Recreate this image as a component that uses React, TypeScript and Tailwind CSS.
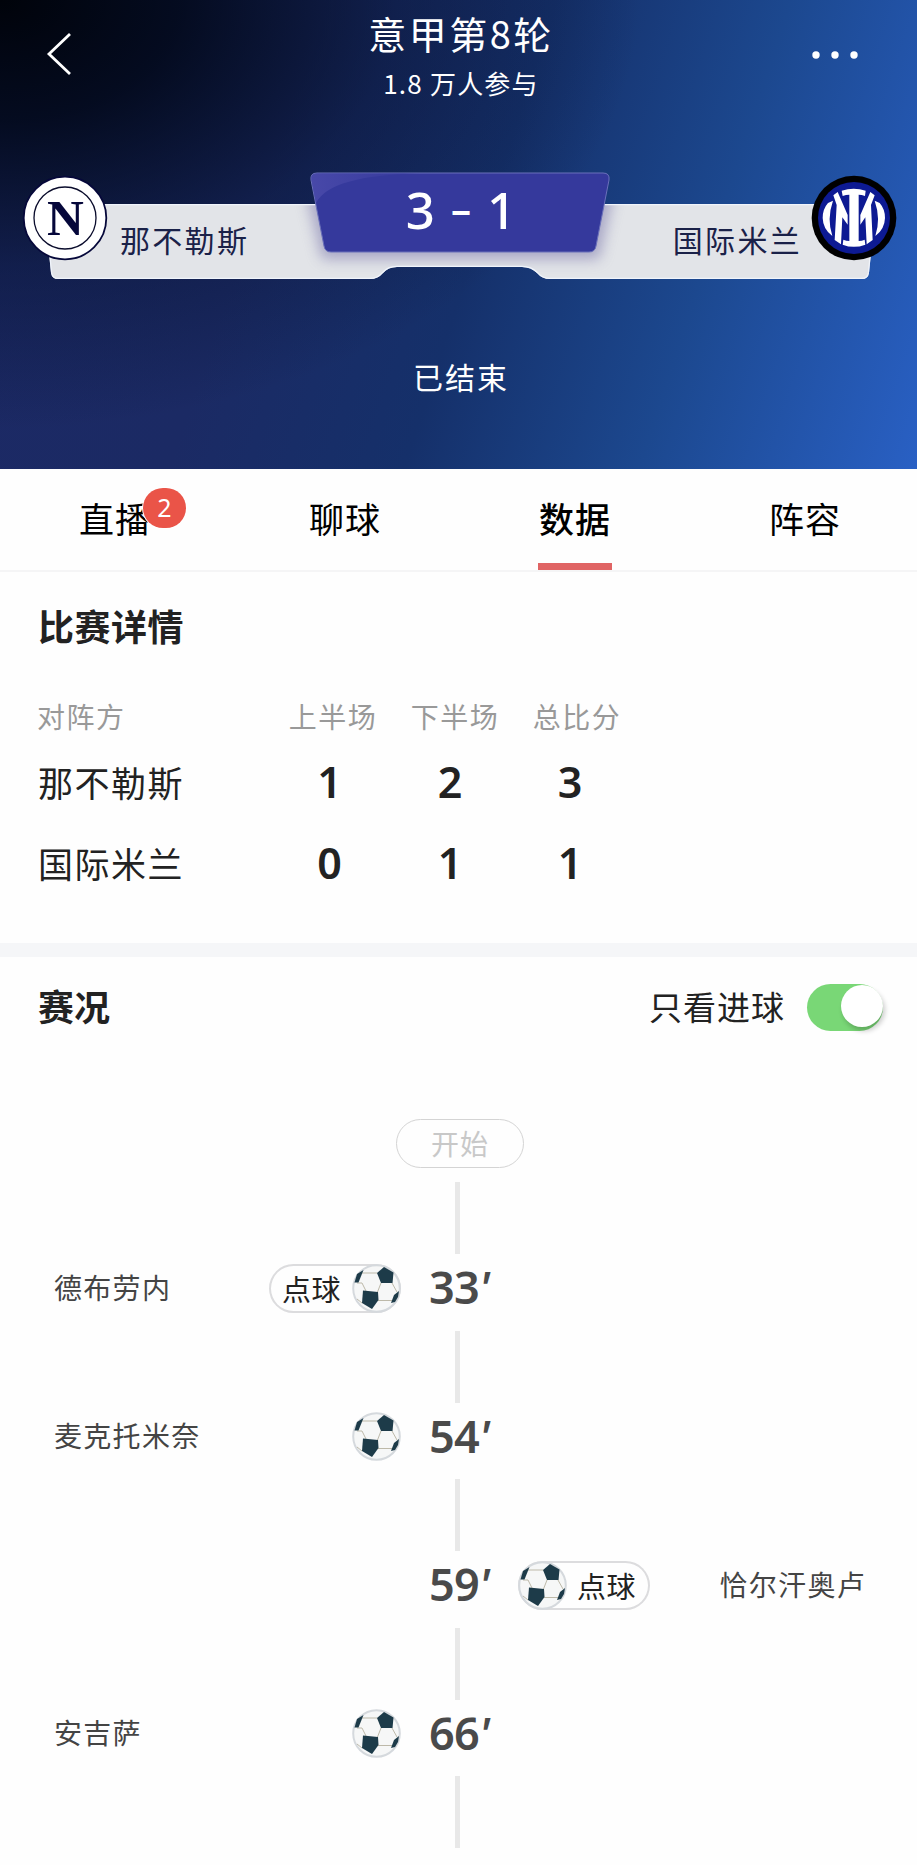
import { useState } from 'react';

const tabs = [
  { name: '直播', badge: 2 },
  { name: '聊球' },
  { name: '数据' },
  { name: '阵容' },
];

const scores = [
  { team: '那不勒斯', first: 1, second: 2, total: 3 },
  { team: '国际米兰', first: 0, second: 1, total: 1 },
];

const goals = [
  { minute: 33, player: '德布劳内', side: 'home', penalty: true },
  { minute: 54, player: '麦克托米奈', side: 'home', penalty: false },
  { minute: 59, player: '恰尔汗奥卢', side: 'away', penalty: true },
  { minute: 66, player: '安吉萨', side: 'home', penalty: false },
];

// Grey-white strip behind the team names, notched under the score
const stripPath = 'M44 37H876L869 106Q868 112 862 112H550Q542 112 537 106Q531 100 522 100H397Q388 100 383 106Q378 112 370 112H58Q52 112 51 106Z';

function NapoliLogo() {
  return (
    <svg className="w-[86px] h-[86px] shrink-0" viewBox="0 0 86 86">
      <circle cx="43" cy="43" r="41.3" fill="#fff" stroke="#06083a" strokeWidth="1.8" />
      <circle cx="43" cy="43" r="31" fill="none" stroke="#0a0c2c" strokeWidth="1.3" />
      <text x="43.5" y="59.5" textAnchor="middle" fill="#05073a" fontSize="51" fontWeight="700" fontFamily="'Liberation Serif', serif">N</text>
    </svg>
  );
}

function InterLogo() {
  return (
    <svg className="w-[86px] h-[86px] shrink-0" viewBox="12 14 258 258">
      <circle cx="141" cy="143" r="127" fill="#000" />
      <circle cx="141" cy="143" r="108" fill="#0d1a93" />
      <g fill="#fff">
        <path d="M104 61 Q140 49 176 61 L174 77 Q164 73 155 73 L155 212 Q165 212 173 208 L175 223 Q140 236 107 223 L109 208 Q118 212 127 212 L127 73 Q117 73 107 77 Z" />
        <path d="M79 75 L92 65 L122 134 L122 163 L106 141 L102 222 L83 209 L89 104 Z" />
        <path d="M203 75 L190 65 L160 134 L160 163 L175 141 L179 222 L197 209 L192 104 Z" />
        <path d="M63 98 L78 91 Q59 145 76 197 Q48 177 47 143 Q47 116 63 98 Z" />
        <path d="M218 98 L203 91 Q222 145 205 197 Q233 177 234 143 Q234 116 218 98 Z" />
      </g>
    </svg>
  );
}

function Ball() {
  return (
    <svg className="w-[49px] h-[49px] shrink-0" viewBox="0 0 49 49">
      <circle cx="24.5" cy="24.5" r="23.3" fill="#f6f7f7" stroke="#d5d9dd" strokeWidth="2" />
      <path d="M10 9H25M29 19L25.5 28M40 19L45 28M26 36.5H40M5 19H10L14 27M10 39L5 35" fill="none" stroke="#bdb9a9" />
      <g fill="#1d3b49">
        <path d="M32 3L41.5 8.5L40.5 19H29L25 9Z" />
        <path d="M11 26.5L26 28L26.5 36L20 45L10 39Z" />
        <path d="M2.5 18.5L5 10L11.5 6L6.5 18.5Z" />
        <path d="M39 39L42 31L47 27L46 33L43 38Z" />
      </g>
    </svg>
  );
}

function BannerShape() {
  return (
    <svg className="absolute inset-0 w-full h-full" viewBox="0 0 917 126">
      <defs>
        <filter id="soft" x="-10%" y="-20%" width="120%" height="150%">
          <feGaussianBlur stdDeviation="7" />
        </filter>
        <clipPath id="strip">
          <path d={stripPath} />
        </clipPath>
        <linearGradient id="shine" x1="0" y1="0" x2="1" y2="0">
          <stop offset="0" stopColor="#504fae" />
          <stop offset="1" stopColor="#35399c" />
        </linearGradient>
      </defs>
      <g clipPath="url(#strip)">
        <rect width="917" height="126" fill="#e2e4e8" />
        <path d="M305 20H615L599 92H322Z" fill="#7f7cae" opacity="0.6" filter="url(#soft)" />
        <path d={stripPath} fill="none" stroke="#f0f4fb" strokeWidth="2.5" />
      </g>
      <path d="M317 6H603Q610 6 609 13L596 79Q595 85 589 85H331Q325 85 324 79L311 13Q310 6 317 6Z" fill="#35399c" stroke="#6a70ba" />
      <path d="M317 6.5H420Q330 8 316 36L311.5 13Q310.5 6.500 317 6.5Z" fill="url(#shine)" opacity="0.7" />
    </svg>
  );
}

function GoalTag({ penalty, side }: { penalty: boolean; side: string }) {
  if (!penalty) return <Ball />;
  return (
    <div className={`flex items-center w-[132px] h-[49px] rounded-full shadow-[inset_0_0_0_2px_#dcdcde] ${side === 'away' ? 'flex-row-reverse' : ''}`}>
      <span className={`flex-1 text-center text-[29px] leading-[47px] tracking-[0.5px] text-[#222] ${side === 'away' ? 'pr-[4px]' : 'pl-[2px]'}`}>
        点球
      </span>
      <Ball />
    </div>
  );
}

function Connector() {
  return <div className="w-[5px] h-[72px] ml-[455px] bg-[#e8e8e8]" />;
}

export default function App() {
  const [active, setActive] = useState('数据');
  const [goalsOnly, setGoalsOnly] = useState(true);

  return (
    <div className="w-[917px] h-[1865px] overflow-hidden bg-[#fefefe] font-['Noto_Sans_CJK_SC',sans-serif] text-[#222]">
      {/* Match header */}
      <header className="h-[469px] text-white bg-[radial-gradient(ellipse_640px_430px_at_0_0,#00030a_0%,rgba(0,6,20,0.85)_28%,rgba(3,14,40,0.4)_62%,rgba(3,14,40,0)_100%),linear-gradient(108deg,#1c2965_0%,#1b2a64_30%,#15306a_52%,#1c488f_74%,#2960c4_100%)]">
        <div className="grid grid-cols-[1fr_300px_1fr] h-[167px]">
          <svg className="w-[30px] h-[50px] ml-[44px] mt-[29px]" viewBox="0 0 30 50" fill="none" stroke="#fff" strokeWidth="2.8">
            <path d="M26 5L5 25L26 45" />
          </svg>
          <div className="text-center pl-[5px]">
            <h1 className="pt-[7px] text-[38px] leading-[52px] tracking-[2.5px]">意甲第8轮</h1>
            <p className="mt-[6px] text-[26px] leading-[36px] tracking-[1.2px]">1.8 万人参与</p>
          </div>
          <svg className="w-[50px] h-[10px] justify-self-end mr-[58px] mt-[50px]" viewBox="0 0 50 10" fill="#fff">
            <circle cx="7" cy="5" r="3.7" />
            <circle cx="26" cy="5" r="3.7" />
            <circle cx="45" cy="5" r="3.7" />
          </svg>
        </div>

        <div className="relative h-[126px]">
          <BannerShape />
          <div className="relative flex items-start justify-between pt-[8px] px-[20px]">
            <div className="flex items-center">
              <div className="ml-[2px]"><NapoliLogo /></div>
              <span className="mt-[41px] ml-[12px] text-[30px] leading-[44px] tracking-[2.3px] text-[#1a2148]">那不勒斯</span>
            </div>
            <div className="flex font-['Noto_Sans',sans-serif] text-[51px] leading-[68px] font-medium">
              <span>3</span><span className="mx-[16px] text-[40px] font-semibold">–</span><span>1</span>
            </div>
            <div className="flex items-center">
              <span className="mt-[41px] mr-[9px] text-[30px] leading-[44px] tracking-[2.3px] text-[#1a2148]">国际米兰</span>
              <InterLogo />
            </div>
          </div>
        </div>
        <div className="pt-[61px] pl-[5px] text-center text-[30px] leading-[44px] tracking-[2px]">已结束</div>
      </header>

      {/* Tabs */}
      <nav className="flex h-[103px] border-b-2 border-[#f5f5f6]">
        {tabs.map((tab) => (
          <button
            key={tab.name} onClick={() => setActive(tab.name)}
            className={`relative flex flex-col items-center w-[230px] shrink-0 pt-[23px] text-black text-[35px] leading-[52px] ${active === tab.name ? 'font-medium' : ''}`}
          >
            <span className="tracking-[1px]">{tab.name}</span>
            {active === tab.name && <span className="mt-auto w-[74px] h-[7px] bg-[#e06464]" />}
            {tab.badge && (
              <span className="absolute left-[143px] top-[19px] w-[43px] h-[40px] rounded-full bg-[#ea5448] text-white text-[25px] leading-[39px] font-['Noto_Sans',sans-serif] shadow-[0_0_0_1px_#fff]">{tab.badge}</span>
            )}
          </button>
        ))}
      </nav>

      {/* Score by half */}
      <section className="h-[371px] px-[38px] pt-[27px]">
        <h2 className="text-[36px] leading-[52px] tracking-[0.5px] font-bold">比赛详情</h2>
        <div className="grid grid-cols-[234px_122px_122px_122px] items-center mt-[37px] mb-[2px] text-[28px] leading-[56px] tracking-[1.5px] text-[#999]">
          <span className="-ml-[1px]">对阵方</span>
          <span className="text-center">上半场</span>
          <span className="text-center">下半场</span>
          <span className="text-center">总比分</span>
        </div>
        {scores.map((row) => (
          <div key={row.team} className="grid grid-cols-[231px_121px_120px_120px] items-center h-[81px] text-[35px]">
            <span className="tracking-[1.5px] -mt-[9px]">{row.team}</span>
            {[row.first, row.second, row.total].map((n, i) => (
              <span key={i} className="text-center -mt-[8px] font-['Noto_Sans',sans-serif] text-[43px] font-semibold">{n}</span>
            ))}
          </div>
        ))}
      </section>

      <div className="h-[14px] bg-[#f5f6f8]" />

      {/* Match events */}
      <section>
        <div className="flex items-center h-[100px] pl-[38px] pr-[34px]">
          <h2 className="-mt-[4px] text-[36px] leading-[52px] font-bold">赛况</h2>
          <span className="ml-auto mr-[22px] -mt-[2px] text-[33px] leading-[50px] tracking-[1px]">只看进球</span>
          <button
            onClick={() => setGoalsOnly(!goalsOnly)}
            className={`flex items-start w-[76px] h-[47px] pt-[1px] rounded-full ${goalsOnly ? 'justify-end bg-[#79d776]' : 'justify-start bg-[#ddd]'}`}
          >
            <span className="w-[42px] h-[42px] rounded-full bg-white shadow-[2px_4px_5px_rgba(0,0,0,0.2)]" />
          </button>
        </div>

        <div className="mt-[62px] ml-[396px] w-[128px] h-[49px] rounded-full border border-[#d4d4d4] text-center text-[28px] leading-[46px] tracking-[1px] text-[#c8c8c8]">开始</div>
        <div className="h-[14px]" />
        <Connector />
        {goals.map((goal) => (
          <div key={goal.minute}>
            <div className="flex items-center h-[76.5px] px-[54px] text-[28px] tracking-[1.3px] text-[#444] -mt-[4px] mb-[4px]">
              <div className="flex items-center justify-between w-[347px]">
                {goal.side === 'home' && <><span className="-mt-[3px]">{goal.player}</span><GoalTag penalty={goal.penalty} side="home" /></>}
              </div>
              <div className="w-[117px] pl-[28px] font-['Noto_Sans',sans-serif] text-[45px] leading-[60px] -mt-[2px] tracking-[-0.8px] font-semibold text-[#4a4a4a]">
                {goal.minute}<span className="italic">'</span>
              </div>
              <div className="flex items-center justify-between flex-1">
                {goal.side === 'away' && <><GoalTag penalty={goal.penalty} side="away" /><span className="-mr-[3px] -mt-[3px]">{goal.player}</span></>}
              </div>
            </div>
            <Connector />
          </div>
        ))}
      </section>
    </div>
  );
}
